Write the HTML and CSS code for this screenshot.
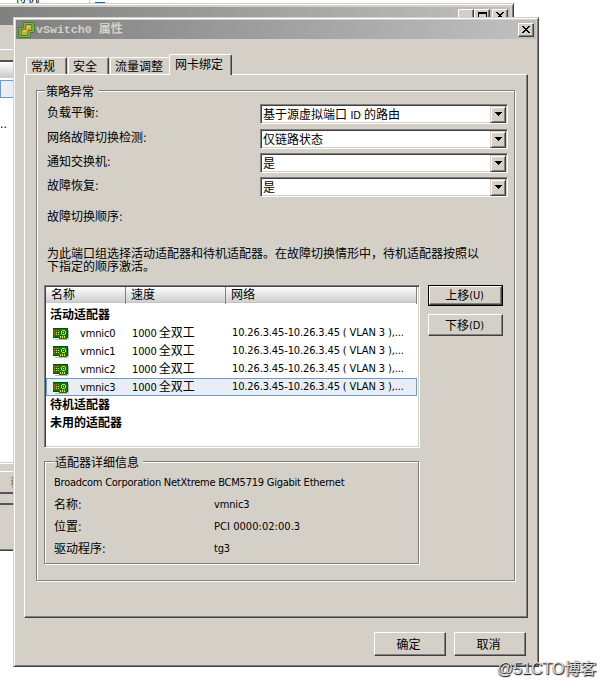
FILE: index.html
```html
<!DOCTYPE html>
<html lang="zh-CN">
<head>
<meta charset="utf-8">
<title>vSwitch0 属性</title>
<link rel="stylesheet" href="styles.css">
</head>
<body>
<svg class="defs" width="0" height="0" aria-hidden="true">
  <symbol id="nic" viewBox="0 0 17 14" shape-rendering="crispEdges">
    <path d="M2 12h13v1H2zM15 3h1v9h-1z" fill="#b9b9b9"/>
    <path d="M0 1h15v10H0z" fill="#087a10"/>
    <path d="M0 1h15v1H0zM14 1h1v10h-1zM0 10h6v1H0z" fill="#064d0b"/>
    <path d="M6 9h8v3H6z" fill="#087a10"/>
    <path d="M1 3h1v1H1zM3 3h1v1H3zM5 3h1v1H5zM1 5h1v1H1zM1 7h1v1H1z" fill="#ff5a1f"/>
    <path d="M3 5h1v1H3zM5 5h1v1H5zM3 7h1v1H3zM5 7h1v1H5zM9 3h3v1H9zM8 4h1v3H8zM12 4h1v3h-1zM9 7h3v1H9zM7 9h1v2H7zM9 9h1v2H9zM11 9h1v2h-1z" fill="#e3dc2c"/>
    <path d="M10 5h1v1h-1z" fill="#fff"/>
  </symbol>
  <symbol id="close" viewBox="0 0 8 7" shape-rendering="crispEdges">
    <path d="M0 0h2v1h1v1h2V1h1V0h2v1H7v1H6v1H5v1h1v1h1v1h1v1H6V6H5V5H3v1H2v1H0V6h1V5h1V4h1V3H2V2H1V1H0z"/>
  </symbol>
  <symbol id="arrow" viewBox="0 0 7 4" shape-rendering="crispEdges">
    <path d="M0 0h7v1H6v1H5v1H4v1H3V3H2V2H1V1H0z"/>
  </symbol>
</svg>

<div class="desktop">
  <div class="strip"><span class="strip-text">待机</span><i class="strip-mark"></i></div>

  <div class="back">
    <div class="back-title">
      <b class="cap"></b><b class="cap"><i class="max"></i></b><b class="cap last"><svg width="8" height="7"><use href="#close"/></svg></b>
    </div>
    <div class="back-gap"></div>
    <div class="back-head"></div>
    <div class="back-sel"></div>
    <div class="back-list">..</div>
    <div class="back-btn"><span>移</span></div>
    <div class="back-foot"></div>
  </div>

  <main class="dialog">
    <header class="title">
      <svg width="17" height="16" viewBox="0 0 17 16">
        <path d="M6.500 1.500h8.500v8h-4v5H2v-8h4.500z" fill="#a9a9a9" stroke="#35700f" stroke-width="3" stroke-linejoin="round"/>
        <path d="M6.500 1.500h8.500v8h-4v5H2v-8h4.500z" fill="none" stroke="#78bf2b" stroke-width="1.700" stroke-linejoin="round"/>
        <path d="M8.500 4h4v4h-4zM4.500 8h4v4h-4z" fill="#f39a18"/>
        <path d="M7 7h3v2H7z" fill="#f39a18"/>
        <path d="M9 4h3v2H9zM5 8h3v2H5z" fill="#fbc35a"/>
      </svg>
      <span class="caption"><span class="mono">vSwitch0</span>属性</span>
      <b class="cap last"><svg width="8" height="7"><use href="#close"/></svg></b>
    </header>

    <nav class="tabs">
      <span class="tab t1">常规</span><span class="tab t2">安全</span><span class="tab t3">流量调整</span><span class="tab active">网卡绑定</span>
    </nav>

    <section class="panel">
      <div class="group policy">
        <div class="legend">策略异常</div>
        <div class="form">
          <label>负载平衡:</label><div class="combo"><span>基于源虚拟端口 <span class="lat">ID</span> 的路由</span><b><svg width="7" height="4"><use href="#arrow"/></svg></b></div>
          <label>网络故障切换检测:</label><div class="combo"><span>仅链路状态</span><b><svg width="7" height="4"><use href="#arrow"/></svg></b></div>
          <label>通知交换机:</label><div class="combo"><span>是</span><b><svg width="7" height="4"><use href="#arrow"/></svg></b></div>
          <label>故障恢复:</label><div class="combo"><span>是</span><b><svg width="7" height="4"><use href="#arrow"/></svg></b></div>
        </div>
        <div class="order">故障切换顺序:</div>
        <p class="hint">为此端口组选择活动适配器和待机适配器。在故障切换情形中，待机适配器按照以<br>下指定的顺序激活。</p>

        <div class="cols">
          <div class="list">
            <div class="row head"><span>名称</span><span>速度</span><span>网络</span></div>
            <div class="cat">活动适配器</div>
            <div class="row"><span class="nic"><svg width="17" height="14"><use href="#nic"/></svg><span class="lat">vmnic0</span></span><span class="speed"><span class="lat">1000</span> 全双工</span><span class="lat net">10.26.3.45-10.26.3.45 ( VLAN 3 ),...</span></div>
            <div class="row"><span class="nic"><svg width="17" height="14"><use href="#nic"/></svg><span class="lat">vmnic1</span></span><span class="speed"><span class="lat">1000</span> 全双工</span><span class="lat net">10.26.3.45-10.26.3.45 ( VLAN 3 ),...</span></div>
            <div class="row"><span class="nic"><svg width="17" height="14"><use href="#nic"/></svg><span class="lat">vmnic2</span></span><span class="speed"><span class="lat">1000</span> 全双工</span><span class="lat net">10.26.3.45-10.26.3.45 ( VLAN 3 ),...</span></div>
            <div class="row selected"><span class="nic"><svg width="17" height="14"><use href="#nic"/></svg><span class="lat">vmnic3</span></span><span class="speed"><span class="lat">1000</span> 全双工</span><span class="lat net">10.26.3.45-10.26.3.45 ( VLAN 3 ),...</span></div>
            <div class="cat">待机适配器</div>
            <div class="cat">未用的适配器</div>
          </div>
          <div class="side">
            <div class="focus"><div class="btn">上移<span class="lat">(U)</span></div></div>
            <div class="btn down">下移<span class="lat">(D)</span></div>
          </div>
        </div>

        <div class="group details">
          <div class="legend">适配器详细信息</div>
          <div class="lat model">Broadcom Corporation NetXtreme BCM5719 Gigabit Ethernet</div>
          <dl>
            <dt>名称:</dt><dd class="lat">vmnic3</dd>
            <dt>位置:</dt><dd class="lat pci">PCI 0000:02:00.3</dd>
            <dt>驱动程序:</dt><dd class="lat">tg3</dd>
          </dl>
        </div>
      </div>
    </section>

    <footer class="actions">
      <div class="btn">确定</div>
      <div class="btn">取消</div>
    </footer>
  </main>
  <div class="watermark">@51CTO博客</div>
</div>
</body>
</html>
```
FILE: styles.css
```css
* { box-sizing: border-box; }
body {
  margin: 0;
  background: #fff;
  color: #000;
  font: 12px/14px "DejaVu Sans Condensed", "Noto Sans CJK SC", sans-serif;
  white-space: nowrap;
}
.defs { position: absolute; }
svg { display: block; flex: none; }
.desktop { position: relative; width: 606px; height: 687px; overflow: hidden; }
.lat { font-size: 11px; letter-spacing: -0.15px; }

/* window behind the dialog */
.strip { display: flex; height: 3px; overflow: hidden; width: 514px; }
.strip-text { margin: -9px 0 0 15px; width: 75px; border-right: 1px solid #c8c8c8; height: 14px; }
.strip-mark { width: 10px; height: 1px; margin: 2px 0 0 5px; background: #0066ff; }
.back {
  position: absolute; left: -3px; top: 3px; width: 517px; height: 548px;
  background: #d4d0c8; padding: 3px 3px 0;
  border-top: 1px solid #d4d0c8;
  border-right: 1px solid #404040; border-bottom: 1px solid #404040;
  box-shadow: inset 0 1px #fff, inset -1px -1px #808080;
}
.back-title { height: 18px; background: linear-gradient(90deg, #808080, #c0c0c0); display: flex; justify-content: flex-end; padding: 2px 2px 0; }
.back-title .last { margin-left: 2px; }
.back-gap { height: 25px; border-bottom: 1px solid #fff; }
.back-head { height: 20px; margin-top: 10px; border-top: 2px solid #505050; background: linear-gradient(#fff, #c9c9c9); border-bottom: 2px solid #fff; }
.back-sel { height: 18px; background: #e9eef6; border: 1px solid #6f9ac3; }
.back-list { height: 366px; background: #fff; border-bottom: 1px solid #fff; padding-top: 19px; box-shadow: inset 0 -1px #d4d0c8; }
.back-btn { margin-top: 7px; height: 23px; color: #808080; border-top: 1px solid #fff; border-bottom: 2px solid #555; padding: 4px 0 0 10px; }
.back-foot { height: 47px; margin-top: 9px; border-top: 2px solid #555; }

.cap {
  display: flex; align-items: center; justify-content: center;
  width: 16px; height: 14px; background: #d4d0c8;
  border: 1px solid; border-color: #fff #404040 #404040 #fff;
  box-shadow: inset -1px -1px #808080;
}
.cap svg { margin: -1px 0 0 -1px; }
.max { width: 9px; height: 9px; border: 1px solid #000; border-top-width: 2px; }

/* dialog frame */
.dialog {
  position: absolute; left: 13px; top: 17px; width: 526px; height: 650px;
  background: #d4d0c8; padding: 2px;
  border: 1px solid; border-color: #d4d0c8 #404040 #404040 #d4d0c8;
  box-shadow: inset 1px 1px #fff, inset -1px -1px #808080;
}
.title { display: flex; align-items: center; height: 19px; padding: 0 2px; background: linear-gradient(90deg, #808080, #c0c0c0); }
.caption { flex: 1; margin-left: 1px; font-weight: bold; color: #d4d0c8; }
.mono { margin-right: 7px; font-family: "Liberation Mono", monospace; font-size: 11.7px; letter-spacing: -0.05px; }

.tabs { display: flex; align-items: flex-end; height: 21px; margin: 15px 8px -1px 10px; position: relative; }
.tab {
  height: 17px; margin-bottom: 1px; padding: 2px 0 0 5px;
  border: 1px solid; border-color: #fff #404040 transparent #fff; border-bottom: 0;
  border-radius: 2px 2px 0 0; box-shadow: inset -1px 0 #808080;
}
.t1 { width: 41px; margin-right: 1px; padding-left: 4px; }
.t2 { width: 41px; margin-right: 1px; padding-left: 4px; }
.t3 { width: 59px; border-right: 0; box-shadow: none; padding-left: 4px; }
.tab.active { width: 63px; height: 21px; margin-bottom: 0; padding-top: 3px; background: #d4d0c8; }

.panel {
  margin: 0 8px; width: 504px; height: 544px; padding: 15px 0 0 11px;
  border: 1px solid; border-color: #fff #404040 #404040 #fff;
  box-shadow: inset -1px -1px #808080;
}
.group { border: 1px solid #808080; box-shadow: inset 1px 1px #fff, 1px 1px #fff; }
.legend { width: fit-content; margin: -8px 0 0 8px; padding: 0 4px 0 1px; background: #d4d0c8; height: 16px; line-height: 18px; }
.policy { width: 479px; height: 491px; }

.form { display: grid; grid-template-columns: 213px 248px; grid-template-rows: 25px 24px 24px 20px; margin: 5px 0 0 10px; }
.form label { line-height: 18px; }
.combo {
  display: flex; justify-content: space-between; height: 20px; background: #fff; padding: 1px 1px 1px 2px;
  border: 1px solid; border-color: #808080 #fff #fff #808080;
  box-shadow: inset 1px 1px #404040, inset -1px -1px #d4d0c8;
}
.combo > span { line-height: 19px; }
.combo b {
  display: flex; align-items: center; justify-content: center; width: 16px; height: 17px; background: #d4d0c8;
  border: 1px solid; border-color: #d4d0c8 #404040 #404040 #d4d0c8;
  box-shadow: inset 1px 1px #fff, inset -1px -1px #808080;
}
.combo svg { margin-top: -1px; }
.order { margin: 12px 0 0 10px; line-height: 16px; }
.hint { margin: 23px 0 0 10px; line-height: 13px; }

.cols { display: flex; gap: 8px; margin: 11px 0 0 7px; }
.list {
  width: 376px; height: 163px; padding: 1px; background: #fff;
  border: 1px solid; border-color: #808080 #fff #fff #808080;
  box-shadow: inset 1px 1px #404040, inset -1px -1px #d4d0c8;
}
.row { display: grid; grid-template-columns: 80px 100px 1fr; height: 18px; line-height: 18px; width: 371px; }
.row > span { padding-left: 6px; }
.row > .nic { display: flex; align-items: center; gap: 10px; padding-left: 7px; }
.row > .net { letter-spacing: -0.13px; }
.speed { word-spacing: -1.3px; }
.row.head { height: 16px; margin-bottom: 3px; line-height: 17px; background: linear-gradient(#fff, #ececec 35%, #d0d0d0); border-bottom: 1px solid #c5c5c5; }
.row.head span { border-right: 1px solid #808080; padding-left: 5px; }
.row.selected { background: #e9eef6; box-shadow: inset 0 0 0 1px #6f9ac3; }
.cat { height: 18px; line-height: 18px; padding-left: 4px; font-weight: bold; }

.btn {
  display: flex; align-items: center; justify-content: center;
  border: 1px solid; border-color: #fff #404040 #404040 #fff;
  box-shadow: inset -1px -1px #808080;
}
.side { width: 75px; }
.side .btn { padding: 1px 2px 0 0; }
.focus { border: 1px solid #000; height: 21px; }
.focus .btn { height: 19px; }
.side .down { height: 22px; margin-top: 8px; }

.details { width: 375px; height: 103px; margin: 13px 0 0 7px; }
.details .legend { margin-left: 9px; }
.model { margin: 4px 0 0 9px; line-height: 18px; letter-spacing: -0.24px; }
dl { display: grid; grid-template-columns: 160px 1fr; grid-auto-rows: 22px; margin: 2px 0 0 9px; line-height: 22px; }
dd { margin: 0; }
.pci { letter-spacing: 0.05px; }

.actions { display: flex; justify-content: flex-end; gap: 8px; margin: 14px 10px 0 0; }
.actions .btn { width: 72px; height: 24px; padding: 1px 3px 0 0; }

.watermark {
  position: absolute; left: 497px; top: 658px;
  font: 16px/22px "Liberation Sans", "Noto Sans CJK SC", sans-serif;
  color: #ddd; text-shadow: 1px 1px 1px #222, 0 1px 1px #555;
}
```
